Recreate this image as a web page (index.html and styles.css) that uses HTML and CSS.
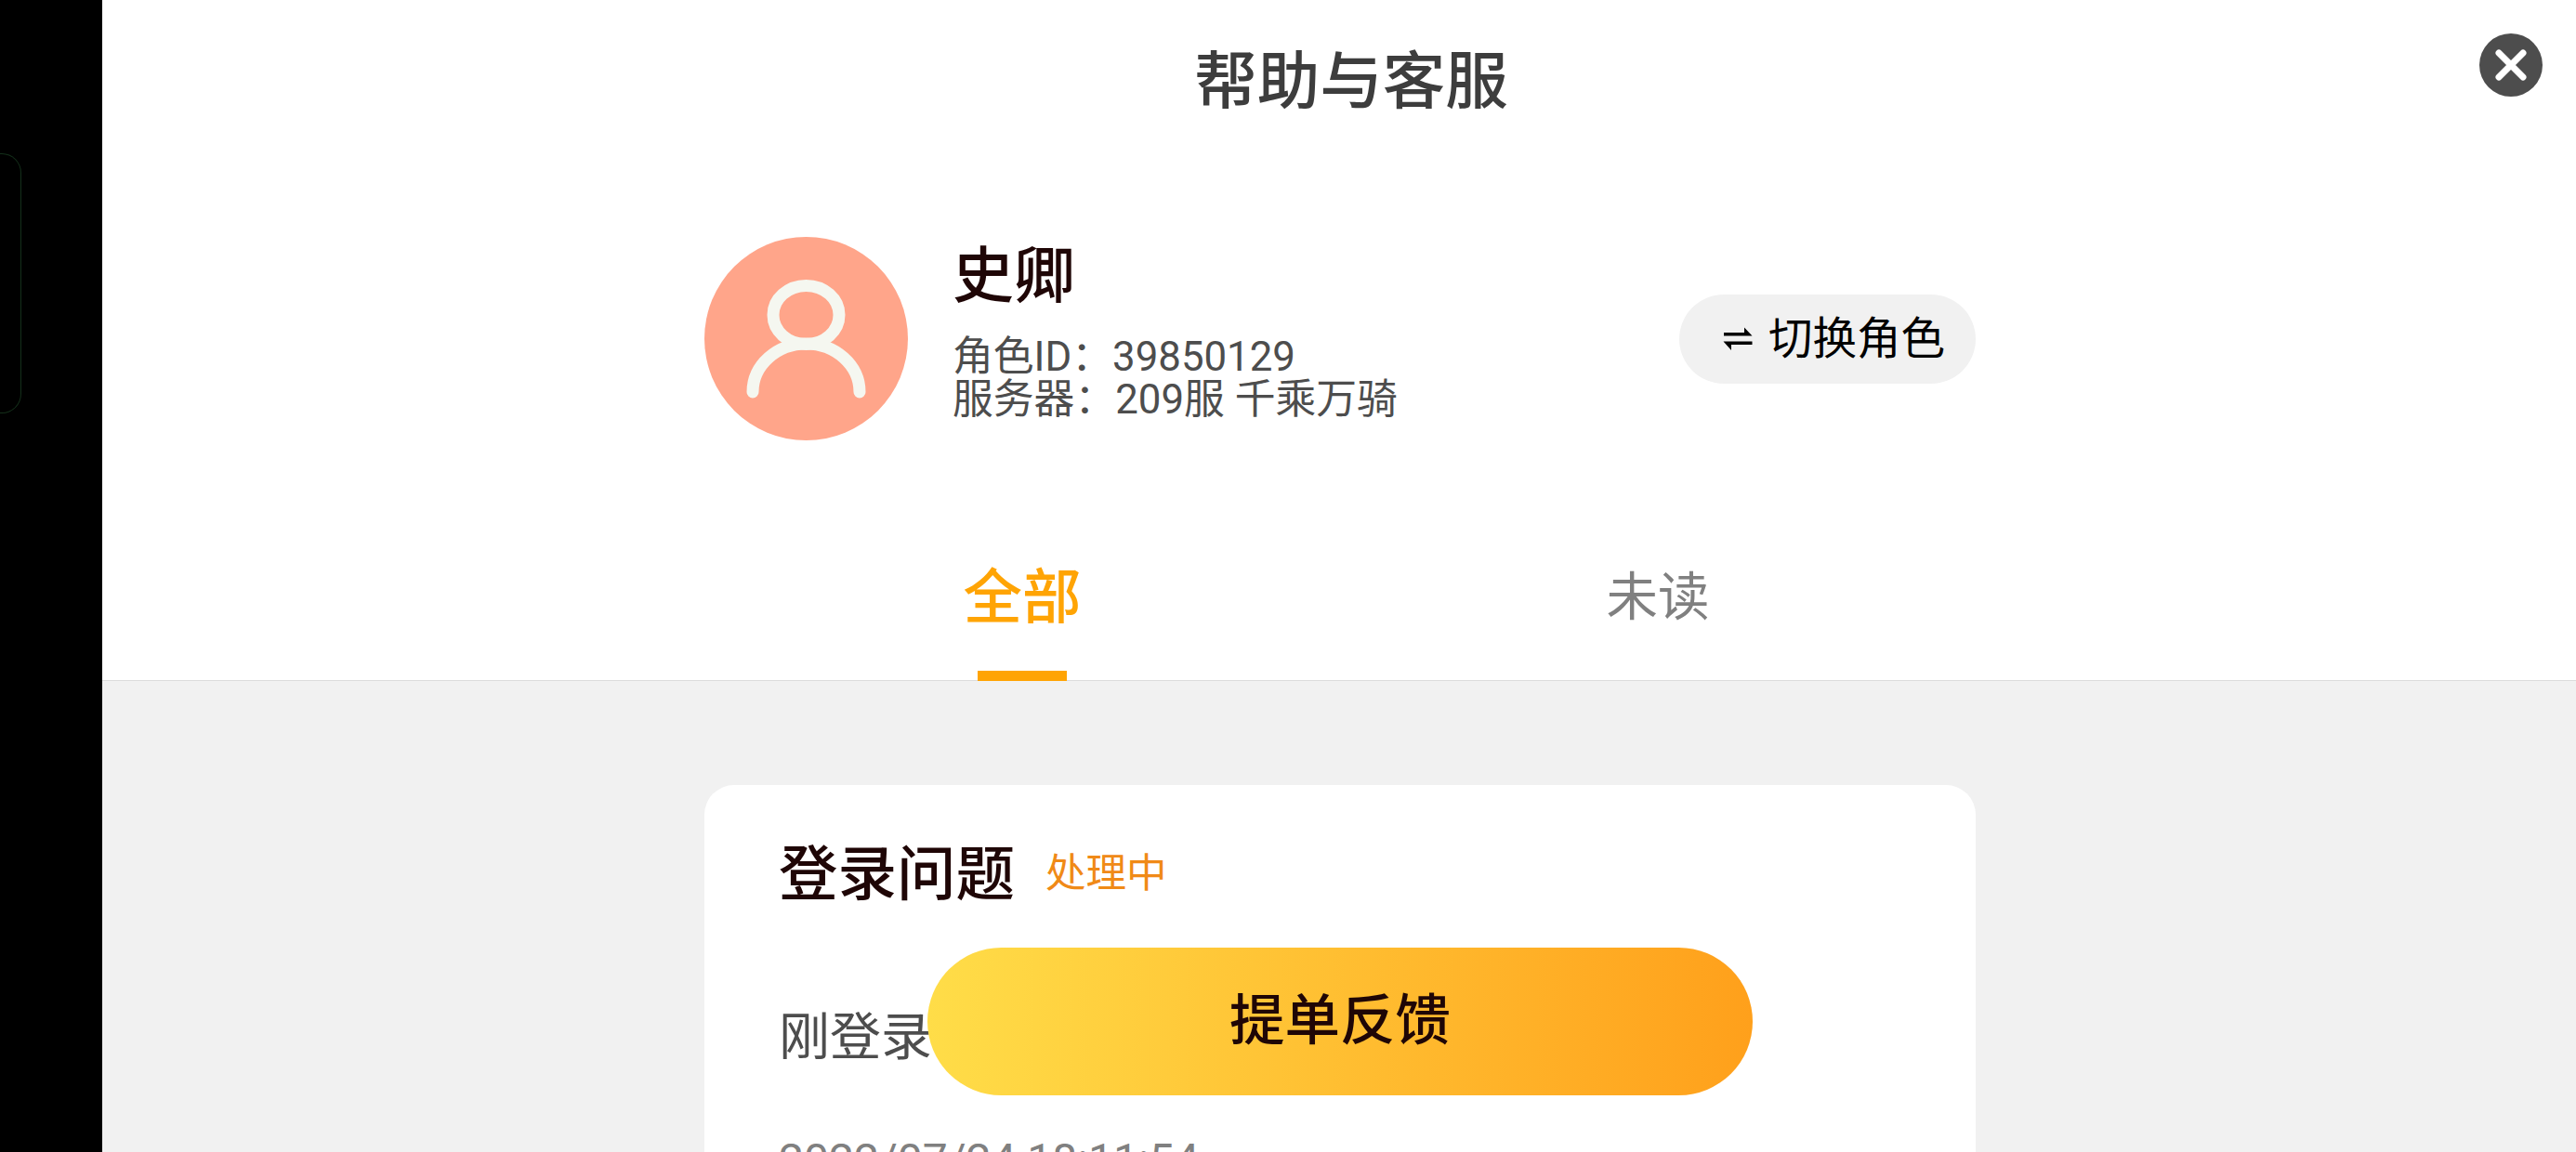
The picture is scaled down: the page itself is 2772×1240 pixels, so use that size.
FILE: index.html
```html
<!DOCTYPE html>
<html lang="zh-CN">
<head>
    <meta charset="UTF-8">
    <meta name="viewport" content="width=device-width, initial-scale=1.0">
    <title>帮助与客服</title>
    <link rel="stylesheet" href="styles.css">
</head>
<body>
<aside class="notch">
    <div class="notch-outline"></div>
</aside>

<main class="page">
    <header class="top">
        <h1 class="title">帮助与客服</h1>
        <button class="close" aria-label="关闭">
            <svg viewBox="0 0 68 68" width="68" height="68">
                <circle cx="34" cy="34" r="34" fill="#4d4d4d"/>
                <path d="M21 21L47 47M47 21L21 47" stroke="#fff" stroke-width="7" stroke-linecap="round"/>
            </svg>
        </button>

        <section class="profile">
            <svg class="avatar" viewBox="0 0 219 219">
                <circle cx="109.5" cy="109.5" r="109.5" fill="#ffa58a"/>
                <g fill="none" stroke="#f5f7f0" stroke-width="13" stroke-linecap="round">
                    <ellipse cx="109.5" cy="84" rx="35.5" ry="31.5"/>
                    <path d="M52 167C52 138 78 115 109.5 115S167 138 167 167"/>
                </g>
            </svg>
            <div class="info">
                <div class="name">史卿</div>
                <div class="meta">角色ID：39850129</div>
                <div class="meta">服务器：209服 千乘万骑</div>
            </div>
            <button class="switch">
                <svg viewBox="0 0 32 26" width="32" height="26">
                    <path d="M1 9.500H31.500L23 .5V6H1ZM31.500 15.500H.5L9 25V19H31.500Z" fill="#000"/>
                </svg>
                切换角色
            </button>
        </section>

        <nav class="tabs">
            <a class="tab active">全部</a>
            <a class="tab">未读</a>
        </nav>
    </header>

    <section class="list">
        <article class="card">
            <div class="card-head">
                <h2 class="card-title">登录问题</h2>
                <span class="status">处理中</span>
            </div>
            <p class="desc">刚登录</p>
            <time class="date">2022/07/24 18:11:54</time>
        </article>
    </section>

    <button class="submit">提单反馈</button>
</main>
</body>
</html>
```

FILE: styles.css
```css
* {
    box-sizing: border-box;
}

body {
    display: flex;
    height: 1240px;
    margin: 0;
    overflow: hidden;
    background-color: #fff;
    font-family: Roboto, "Noto Sans CJK SC", sans-serif;
    color: #1f0606;
}

button {
    border: none;
    padding: 0;
    font-family: inherit;
    cursor: pointer;
}

h1, h2, p {
    margin: 0;
}

.notch {
    flex: none;
    width: 110px;
    padding-top: 165px;
    background-color: #000;
}

.notch-outline {
    width: 23px;
    height: 280px;
    border: 1px solid #14301a;
    border-left: none;
    border-radius: 0 21px 21px 0;
}

.page {
    position: relative;
    display: flex;
    flex-direction: column;
    flex: 1;
    height: 1240px;
    overflow: hidden;
}

.top {
    flex: none;
    height: 733px;
    border-bottom: 1px solid #dcdcdc;
}

.title {
    height: 255px;
    padding: 38px 0 0 26px;
    font-size: 67.5px;
    font-weight: 500;
    line-height: 100px;
    text-align: center;
    color: #3d3d3d;
}

.close {
    position: absolute;
    top: 36px;
    right: 36px;
    width: 68px;
    height: 68px;
    background: none;
}

.close svg {
    display: block;
}

.profile {
    display: flex;
    align-items: center;
    width: 1368px;
    height: 219px;
    margin-left: 648px;
}

.avatar {
    width: 219px;
    height: 219px;
    margin-right: 48px;
}

.info {
    flex: 1;
    height: 219px;
}

.name {
    height: 106px;
    font-size: 66px;
    font-weight: 500;
    line-height: 85px;
}

.meta {
    font-size: 43.8px;
    line-height: 46px;
    color: #4d4d4d;
}

.switch {
    display: flex;
    align-items: center;
    justify-content: center;
    gap: 17px;
    width: 319px;
    height: 96px;
    padding-left: 14px;
    border-radius: 48px;
    background-color: #f1f1f1;
    font-size: 47.5px;
    line-height: 94px;
    color: #000;
}

.tabs {
    display: flex;
    width: 1368px;
    height: 259px;
    margin-left: 648px;
    padding-top: 120px;
}

.tab {
    display: flex;
    flex: 1;
    flex-direction: column;
    align-items: center;
    justify-content: space-between;
    font-size: 55.5px;
    line-height: 100px;
    color: #808080;
}

.tab.active {
    font-size: 63.5px;
    font-weight: 500;
    color: #ffa404;
}

.tab.active::after {
    content: "";
    width: 96px;
    height: 11px;
    background-color: #ffa404;
}

.list {
    flex: 1;
    padding: 112px 0 0 648px;
    background-color: #f1f1f1;
}

.card {
    width: 1368px;
    height: 500px;
    padding: 40px 80px;
    border-radius: 32px;
    background-color: #fff;
}

.card-head {
    display: flex;
    align-items: center;
    height: 100px;
}

.card-title {
    margin-right: 33px;
    font-size: 63.5px;
    font-weight: 500;
}

.status {
    padding-top: 3px;
    font-size: 43.5px;
    color: #f08a17;
}

.desc {
    margin-top: 81px;
    font-size: 55px;
    line-height: 100px;
    color: #4d4d4d;
}

.date {
    display: block;
    margin-top: 43px;
    font-size: 48px;
    line-height: 80px;
    color: #808080;
}

.submit {
    position: absolute;
    top: 1020px;
    left: 888px;
    width: 888px;
    height: 159px;
    border-radius: 80px;
    background: linear-gradient(to right, #ffdd48, #ffa01b);
    font-size: 59.5px;
    font-weight: 500;
    line-height: 157px;
    color: #1f0606;
}
```
